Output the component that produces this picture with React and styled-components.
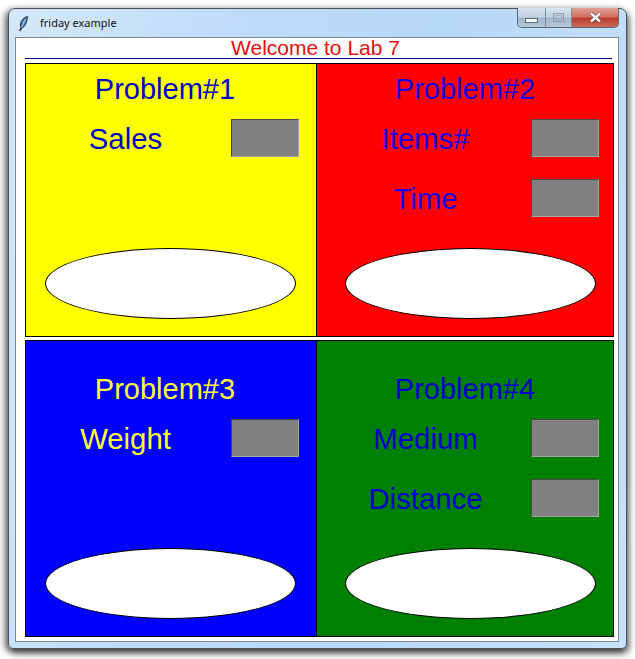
import React from "react";
import styled, { createGlobalStyle } from "styled-components";

const GlobalStyle = createGlobalStyle`
  html, body {
    margin: 0;
    padding: 0;
    background: #fff;
  }
  body {
    font-family: "Liberation Sans", Arial, sans-serif;
  }
`;

const Page = styled.div`
  width: 635px;
  height: 659px;
  padding: 8px 8px 10px 8px;
  box-sizing: border-box;
  overflow: hidden;
`;

const Frame = styled.div`
  width: 619px;
  height: 641px;
  box-sizing: border-box;
  display: flex;
  flex-direction: column;
  border: 1px solid #4a5058;
  border-radius: 7px 7px 5px 5px;
  background: linear-gradient(100deg, #d4e8fa 0%, #c0dcf8 30%, #b8d8f8 60%, #c8e0f8 100%);
  box-shadow: -3px 2px 7px rgba(0, 0, 0, 0.55), 2px 4px 7px rgba(0, 0, 0, 0.6);
  padding: 0 7px 6px 6px;
`;

const TitleBar = styled.div`
  height: 28px;
  flex: none;
  display: flex;
  align-items: center;
`;

const Feather = styled.svg`
  width: 14px;
  height: 17px;
  margin-left: 3px;
  flex: none;
`;

const TitleText = styled.span`
  margin-left: 8px;
  margin-top: -1px;
  font-family: "Noto Sans", sans-serif;
  font-size: 11px;
  color: #111;
`;

const Controls = styled.div`
  margin-left: auto;
  margin-top: -10px;
  height: 19px;
  display: flex;
  border: 1px solid #5a6672;
  border-top: none;
  border-radius: 0 0 5px 5px;
  overflow: hidden;
`;

const ControlButton = styled.div`
  width: ${(p) => p.$width}px;
  display: flex;
  align-items: center;
  justify-content: center;
  background: ${(p) =>
    p.$close
      ? "linear-gradient(#e0a096 0%, #cf7264 45%, #b83e2e 55%, #c96a58 100%)"
      : "linear-gradient(#d8e4f0 0%, #c0d2e4 45%, #a4b8cc 55%, #b4c8dc 100%)"};
  & + & {
    border-left: 1px solid #7e8e9e;
  }
`;

const MinBar = styled.span`
  width: 11px;
  height: 3px;
  margin-top: 6px;
  background: #f4f6f8;
  border: 1px solid #5e6c7a;
`;

const MaxBox = styled.span`
  width: 9px;
  height: 7px;
  border: 1px solid #8a9aa8;
  display: flex;
  align-items: center;
  justify-content: center;
  &::after {
    content: "";
    width: 5px;
    height: 3px;
    border: 1px solid #9cacba;
  }
`;

const CloseIcon = styled.svg`
  width: 13px;
  height: 11px;
`;

const Client = styled.div`
  flex: 1;
  display: flex;
  flex-direction: column;
  background: #fff;
  border: 1px solid #7b8794;
  box-sizing: border-box;
  padding: 0 4px 4px 9px;
`;

const Header = styled.div`
  height: 21px;
  display: flex;
  justify-content: center;
  align-items: flex-end;
  border-bottom: 1px solid #000080;
  width: 587px;
  padding-right: 6px;
  box-sizing: border-box;
`;

const Welcome = styled.div`
  font-size: 21px;
  line-height: 20px;
  color: #e60f0f;
`;

const Board = styled.div`
  margin-top: 4px;
  display: grid;
  grid-template-columns: 292px 297px;
  grid-template-rows: 274px 297px;
  row-gap: 3px;
`;

const Panel = styled.div`
  background: ${(p) => p.$bg};
  color: ${(p) => p.$ink};
  border: 1px solid #000;
  box-sizing: border-box;
  display: flex;
  flex-direction: column;
  padding-left: ${(p) => p.$inset}px;
  padding-top: ${(p) => p.$top}px;
  padding-bottom: 17px;
  &:nth-child(even) {
    border-left: none;
  }
`;

const Heading = styled.div`
  width: 240px;
  text-align: center;
  font-size: 29px;
  line-height: 34px;
`;

const Fields = styled.div`
  margin-top: 13px;
  display: flex;
  flex-direction: column;
  gap: 22px;
`;

const Field = styled.div`
  display: flex;
  align-items: center;
`;

const FieldLabel = styled.div`
  width: 161px;
  margin-right: 20px;
  padding-top: 2px;
  text-align: center;
  font-size: 29.33px;
  line-height: 36px;
`;

const Entry = styled.div`
  margin-left: 5px;
  width: 68px;
  height: 38px;
  box-sizing: border-box;
  background: #808080;
  border: 1px solid;
  border-color: rgba(0, 0, 0, 0.45) rgba(255, 255, 255, 0.3) rgba(255, 255, 255, 0.3) rgba(0, 0, 0, 0.45);
`;

const Oval = styled.div`
  margin-top: auto;
  width: 251px;
  height: 71px;
  box-sizing: border-box;
  background: #fff;
  border: 1px solid #000;
  border-radius: 50%;
`;

const panels = [
  { id: 1, bg: "#ffff00", ink: "#0000cd", inset: 19, top: 8, fields: ["Sales"] },
  { id: 2, bg: "#ff0000", ink: "#1a00e0", inset: 28, top: 8, fields: ["Items#", "Time"] },
  { id: 3, bg: "#0000ff", ink: "#ffff33", inset: 19, top: 31, fields: ["Weight"] },
  { id: 4, bg: "#008000", ink: "#0000cd", inset: 28, top: 31, fields: ["Medium", "Distance"] },
];

export default function App() {
  return (
    <Page>
      <GlobalStyle />
      <Frame>
        <TitleBar>
          <Feather viewBox="0 0 14 17">
            <path
              d="M9.4 1.5 C6 2.2 3 5.5 2.5 9 C2.3 10.5 2.6 11.6 3 12.4 L1.6 15.6 L2.4 15.8 L3.9 12.8 C5.6 12.4 7.2 10.6 8.1 8 C8.8 5.8 9.6 3.5 9.4 1.5 Z"
              fill="#4f7fbe"
              stroke="#15202e"
              strokeWidth="0.9"
            />
            <path d="M7.6 4 L3.4 12.4" stroke="#c9def4" strokeWidth="0.8" fill="none" />
          </Feather>
          <TitleText>friday example</TitleText>
          <Controls>
            <ControlButton $width={27}>
              <MinBar />
            </ControlButton>
            <ControlButton $width={25}>
              <MaxBox />
            </ControlButton>
            <ControlButton $width={46} $close>
              <CloseIcon viewBox="0 0 13 11">
                <path d="M2 1.5 L11 9.5 M11 1.5 L2 9.5" stroke="#4a3a3a" strokeWidth="3.6" />
                <path d="M2 1.5 L11 9.5 M11 1.5 L2 9.5" stroke="#f8f8f8" strokeWidth="2.4" />
              </CloseIcon>
            </ControlButton>
          </Controls>
        </TitleBar>
        <Client>
          <Header>
            <Welcome>Welcome to Lab 7</Welcome>
          </Header>
          <Board>
            {panels.map((panel) => (
              <Panel key={panel.id} $bg={panel.bg} $ink={panel.ink} $inset={panel.inset} $top={panel.top}>
                <Heading>Problem#{panel.id}</Heading>
                <Fields>
                  {panel.fields.map((name) => (
                    <Field key={name}>
                      <FieldLabel>{name}</FieldLabel>
                      <Entry />
                    </Field>
                  ))}
                </Fields>
                <Oval />
              </Panel>
            ))}
          </Board>
        </Client>
      </Frame>
    </Page>
  );
}
